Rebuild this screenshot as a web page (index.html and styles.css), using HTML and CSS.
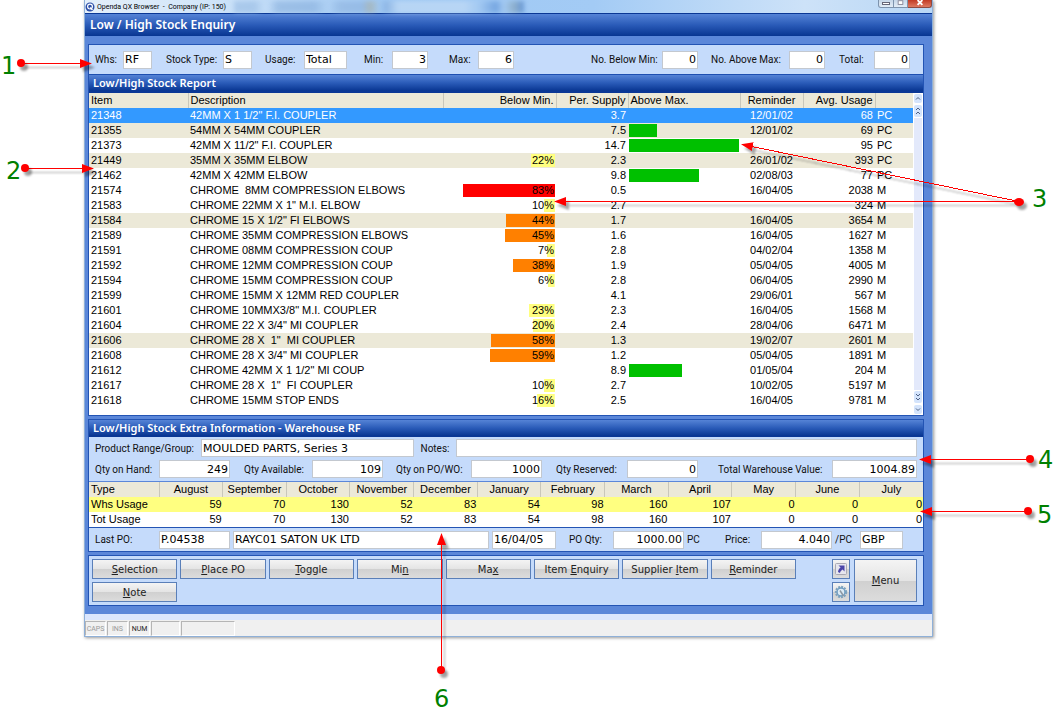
FILE: index.html
```html
<!DOCTYPE html>
<html lang="en">
<head>
    <meta charset="UTF-8">
    <meta name="viewport" content="width=device-width, initial-scale=1.0">
    <title>Low / High Stock Enquiry</title>
    <link rel="stylesheet" href="styles.css">
</head>
<body>
    <div class="window">
        <header class="titlebar">
            <svg class="app-icon" width="10" height="10" viewBox="0 0 10 10">
                <circle cx="5" cy="5" r="4.5" fill="#2c4fa8"/>
                <circle cx="5" cy="4.600" r="2.400" fill="none" stroke="#fff" stroke-width="1.200"/>
                <path d="M5 5.500L7.500 8" stroke="#fff" stroke-width="1.200"/>
            </svg>
            <span class="caption">Openda QX Browser &nbsp;- &nbsp;Company (IP: 150)</span>
            <span class="glass"></span>
            <div class="controls">
                <button class="ctl" aria-label="Minimise"><svg width="14" height="7" viewBox="0 0 14 7"><rect x="3.500" y="2.500" width="7" height="2" fill="#fff" stroke="#667"/></svg></button>
                <button class="ctl" aria-label="Maximise"><svg width="13" height="7" viewBox="0 0 14 7"><rect x="4.500" y="0.500" width="5" height="4" fill="#fff" stroke="#889"/></svg></button>
                <button class="ctl close" aria-label="Close"><svg width="23" height="7" viewBox="0 0 24 7"><path d="M10 0l5 5M15 0l-5 5" stroke="#fff" stroke-width="2"/></svg></button>
            </div>
        </header>

        <main class="app">
            <h1>Low / High Stock Enquiry</h1>

            <section class="panel">
                <form class="fields filter">
                    <label for="whs">Whs:</label><input id="whs" class="w-s" value="RF">
                    <label for="stockType">Stock Type:</label><input id="stockType" class="w-s" value="S">
                    <label for="usage">Usage:</label><input id="usage" class="w-l" value="Total">
                    <label for="min">Min:</label><input id="min" class="w-m num" value="3">
                    <label for="max">Max:</label><input id="max" class="w-m num" value="6">
                    <label for="below">No. Below Min:</label><input id="below" class="w-m num" value="0">
                    <label for="above">No. Above Max:</label><input id="above" class="w-m num" value="0">
                    <label for="total">Total:</label><input id="total" class="w-m num" value="0">
                </form>
                <h2 class="ruled">Low/High Stock Report</h2>
                <div class="report">
                    <table class="stock">
                        <colgroup>
                            <col class="c-item"><col><col class="c-below"><col class="c-supply"><col class="c-above"><col class="c-rem"><col class="c-avg"><col class="c-unit">
                        </colgroup>
                        <thead>
                            <tr><th>Item</th><th>Description</th><th class="num">Below Min.</th><th class="num">Per. Supply</th><th>Above Max.</th><th class="mid">Reminder</th><th class="num">Avg. Usage</th><th></th></tr>
                        </thead>
                        <tbody>
                            <tr class="selected"><td>21348</td><td>42MM X 1 1/2" F.I. COUPLER</td><td></td><td>3.7</td><td></td><td>12/01/02</td><td>68</td><td>PC</td></tr>
                            <tr class="shade"><td>21355</td><td>54MM X 54MM COUPLER</td><td></td><td>7.5</td><td><div class="over" style="width:25%"></div></td><td>12/01/02</td><td>69</td><td>PC</td></tr>
                            <tr><td>21373</td><td>42MM X 11/2" F.I. COUPLER</td><td></td><td>14.7</td><td><div class="over" style="width:100%"></div></td><td></td><td>95</td><td>PC</td></tr>
                            <tr class="shade"><td>21449</td><td>35MM X 35MM ELBOW</td><td><div class="under low" style="--level:22%">22%</div></td><td>2.3</td><td></td><td>26/01/02</td><td>393</td><td>PC</td></tr>
                            <tr><td>21462</td><td>42MM X 42MM ELBOW</td><td></td><td>9.8</td><td><div class="over" style="width:64%"></div></td><td>02/08/03</td><td>77</td><td>PC</td></tr>
                            <tr><td>21574</td><td>CHROME &nbsp;8MM COMPRESSION ELBOWS</td><td><div class="under high" style="--level:83%">83%</div></td><td>0.5</td><td></td><td>16/04/05</td><td>2038</td><td>M</td></tr>
                            <tr><td>21583</td><td>CHROME 22MM X 1" M.I. ELBOW</td><td><div class="under low" style="--level:10%">10%</div></td><td>2.7</td><td></td><td></td><td>324</td><td>M</td></tr>
                            <tr class="shade"><td>21584</td><td>CHROME 15 X 1/2" FI ELBOWS</td><td><div class="under medium" style="--level:44%">44%</div></td><td>1.7</td><td></td><td>16/04/05</td><td>3654</td><td>M</td></tr>
                            <tr><td>21589</td><td>CHROME 35MM COMPRESSION ELBOWS</td><td><div class="under medium" style="--level:45%">45%</div></td><td>1.6</td><td></td><td>16/04/05</td><td>1627</td><td>M</td></tr>
                            <tr><td>21591</td><td>CHROME 08MM COMPRESSION COUP</td><td><div class="under low" style="--level:7%">7%</div></td><td>2.8</td><td></td><td>04/02/04</td><td>1358</td><td>M</td></tr>
                            <tr><td>21592</td><td>CHROME 12MM COMPRESSION COUP</td><td><div class="under medium" style="--level:38%">38%</div></td><td>1.9</td><td></td><td>05/04/05</td><td>4005</td><td>M</td></tr>
                            <tr><td>21594</td><td>CHROME 15MM COMPRESSION COUP</td><td><div class="under low" style="--level:6%">6%</div></td><td>2.8</td><td></td><td>06/04/05</td><td>2990</td><td>M</td></tr>
                            <tr><td>21599</td><td>CHROME 15MM X 12MM RED COUPLER</td><td></td><td>4.1</td><td></td><td>29/06/01</td><td>567</td><td>M</td></tr>
                            <tr><td>21601</td><td>CHROME 10MMX3/8" M.I. COUPLER</td><td><div class="under low" style="--level:23%">23%</div></td><td>2.3</td><td></td><td>16/04/05</td><td>1568</td><td>M</td></tr>
                            <tr><td>21604</td><td>CHROME 22 X 3/4" MI COUPLER</td><td><div class="under low" style="--level:20%">20%</div></td><td>2.4</td><td></td><td>28/04/06</td><td>6471</td><td>M</td></tr>
                            <tr class="shade"><td>21606</td><td>CHROME 28 X &nbsp;1" &nbsp;MI COUPLER</td><td><div class="under medium" style="--level:58%">58%</div></td><td>1.3</td><td></td><td>19/02/07</td><td>2601</td><td>M</td></tr>
                            <tr><td>21608</td><td>CHROME 28 X 3/4" MI COUPLER</td><td><div class="under medium" style="--level:59%">59%</div></td><td>1.2</td><td></td><td>05/04/05</td><td>1891</td><td>M</td></tr>
                            <tr><td>21612</td><td>CHROME 42MM X 1 1/2" MI COUP</td><td></td><td>8.9</td><td><div class="over" style="width:48%"></div></td><td>01/05/04</td><td>204</td><td>M</td></tr>
                            <tr><td>21617</td><td>CHROME 28 X &nbsp;1" &nbsp;FI COUPLER</td><td><div class="under low" style="--level:10%">10%</div></td><td>2.7</td><td></td><td>10/02/05</td><td>5197</td><td>M</td></tr>
                            <tr><td>21618</td><td>CHROME 15MM STOP ENDS</td><td><div class="under low" style="--level:16%">16%</div></td><td>2.5</td><td></td><td>16/04/05</td><td>9781</td><td>M</td></tr>
                        </tbody>
                    </table>
                    <div class="scroller">
                        <button aria-label="Line up"><svg width="8" height="9" viewBox="0 0 8 9"><path d="M2 5.500l2-2 2 2"/></svg></button>
                        <button aria-label="Page up"><svg width="8" height="12" viewBox="0 0 8 12"><path d="M2 5l2-2 2 2M2 9l2-2 2 2"/></svg></button>
                        <div class="track"></div>
                        <button aria-label="Page down"><svg width="8" height="12" viewBox="0 0 8 12"><path d="M2 3l2 2 2-2M2 7l2 2 2-2"/></svg></button>
                        <button aria-label="Line down"><svg width="8" height="9" viewBox="0 0 8 9"><path d="M2 3.500l2 2 2-2"/></svg></button>
                    </div>
                </div>
            </section>

            <section class="panel">
                <h2>Low/High Stock Extra Information - Warehouse RF</h2>
                <div class="extra">
                    <div class="fields range">
                        <label for="range">Product Range/Group:</label><input id="range" value="MOULDED PARTS, Series 3">
                        <label for="notes">Notes:</label><input id="notes">
                    </div>
                    <div class="fields qty">
                        <label for="onHand">Qty on Hand:</label><input id="onHand" class="w-q num" value="249">
                        <label for="available">Qty Available:</label><input id="available" class="w-q num" value="109">
                        <label for="onPo">Qty on PO/WO:</label><input id="onPo" class="w-q num" value="1000">
                        <label for="reserved">Qty Reserved:</label><input id="reserved" class="w-q num" value="0">
                        <label for="value">Total Warehouse Value:</label><input id="value" class="num" value="1004.89">
                    </div>
                </div>
                <table class="months">
                    <colgroup><col class="c-type"><col span="12"></colgroup>
                    <thead>
                        <tr><th>Type</th><th>August</th><th>September</th><th>October</th><th>November</th><th>December</th><th>January</th><th>February</th><th>March</th><th>April</th><th>May</th><th>June</th><th>July</th></tr>
                    </thead>
                    <tbody>
                        <tr class="current"><td>Whs Usage</td><td>59</td><td>70</td><td>130</td><td>52</td><td>83</td><td>54</td><td>98</td><td>160</td><td>107</td><td>0</td><td>0</td><td>0</td></tr>
                        <tr><td>Tot Usage</td><td>59</td><td>70</td><td>130</td><td>52</td><td>83</td><td>54</td><td>98</td><td>160</td><td>107</td><td>0</td><td>0</td><td>0</td></tr>
                    </tbody>
                </table>
                <div class="fields order">
                    <label for="lastPo">Last PO:</label><input id="lastPo" class="w-q" value="P.04538">
                    <input class="supplier" aria-label="Supplier" value="RAYC01 SATON UK LTD">
                    <input class="w-date" aria-label="Order date" value="16/04/05">
                    <label for="poQty">PO Qty:</label><input id="poQty" class="w-q num" value="1000.00"><span>PC</span>
                    <label for="price">Price:</label><input id="price" class="w-q num" value="4.040"><span>/PC</span>
                    <input class="w-l" aria-label="Currency" value="GBP">
                </div>
            </section>

            <nav class="panel actions">
                <div class="buttons">
                    <button><u>S</u>election</button>
                    <button><u>P</u>lace PO</button>
                    <button><u>T</u>oggle</button>
                    <button>Mi<u>n</u></button>
                    <button>Ma<u>x</u></button>
                    <button>Item <u>E</u>nquiry</button>
                    <button>Supplier <u>I</u>tem</button>
                    <button><u>R</u>eminder</button>
                    <button><u>N</u>ote</button>
                </div>
                <div class="tools">
                    <button aria-label="Shortcut">
                        <svg width="14" height="14" viewBox="0 0 14 14">
                            <rect x="1.500" y="1.500" width="11" height="11" rx="1" fill="#e6e6ee" stroke="#a9a9b4"/>
                            <path d="M4.500 3.500H10.500V9.500L8.600 7.600C7.300 8.400 6.300 9.500 6 11L4 10C4.200 8 5.200 6.600 6.600 5.600Z" fill="#4a44a8"/>
                        </svg>
                    </button>
                    <button aria-label="Settings">
                        <svg width="14" height="14" viewBox="0 0 14 14">
                            <circle cx="7" cy="7" r="5.200" fill="none" stroke="#7fa3bd" stroke-width="2" stroke-dasharray="2 1"/>
                            <circle cx="7" cy="7" r="4" fill="#dcebf5" stroke="#6f9cc0" stroke-width="1.500"/>
                            <path d="M6 5.500L9.500 11" stroke="#8d98a3" stroke-width="1.500"/>
                        </svg>
                    </button>
                </div>
                <button class="menu"><u>M</u>enu</button>
            </nav>
        </main>

        <footer class="status">
            <span>CAPS</span><span>INS</span><span class="on">NUM</span><span class="blank"></span><span class="wide"></span>
        </footer>
    </div>

    <!-- numbered call-outs over the window -->
    <svg class="callouts" width="1056" height="712" viewBox="0 0 1056 712">
        <defs>
            <marker id="head" markerUnits="userSpaceOnUse" markerWidth="13" markerHeight="10" refX="11" refY="5" orient="auto">
                <path d="M0 0.500L12 5L0 9.500Z"/>
            </marker>
        </defs>
        <g class="arrows">
            <path d="M21 63.500H91"/>
            <path d="M25 168.500H93"/>
            <path d="M1019 201.500L742 144.500"/>
            <path d="M1019 201.500H555"/>
            <path d="M1030 459.500H920"/>
            <path d="M1028 511.500H921"/>
            <path d="M441.500 670V534"/>
        </g>
        <g class="dots">
            <circle cx="21" cy="63" r="4"/>
            <circle cx="25" cy="168" r="4"/>
            <ellipse cx="1019" cy="202" rx="5" ry="4"/>
            <circle cx="1030" cy="459" r="4"/>
            <circle cx="1028" cy="511" r="4"/>
            <circle cx="441" cy="670" r="4"/>
        </g>
        <g class="numbers">
            <text x="1" y="74">1</text>
            <text x="6" y="179">2</text>
            <text x="1032" y="207">3</text>
            <text x="1038" y="468">4</text>
            <text x="1037" y="523">5</text>
            <text x="434" y="707">6</text>
        </g>
    </svg>
</body>
</html>
```

FILE: styles.css
```css
* {
    box-sizing: border-box;
}
body {
    margin: 0;
    min-height: 100vh;
    background: #fff;
    color: #000;
    font-family: Roboto, sans-serif;
    font-size: 10px;
    position: relative;
}
button, input {
    font: inherit;
    color: inherit;
}
.window {
    margin: 0 123px 0 84px;
    border: 1px solid #8fb0d8;
    border-top: none;
    box-shadow: 1px 1px 3px rgba(0, 0, 0, 0.4);
}

/* title bar */
.titlebar {
    display: flex;
    align-items: center;
    height: 13px;
    background: linear-gradient(90deg, #e4effa 0, #d3e6f9 110px, #9fc8f3 300px, #a3cbf5 60%, #cde2f8 85%, #b9d7f5);
}
.app-icon {
    margin-right: 2px;
}
.caption {
    font-size: 7px;
    line-height: 12px;
}
.glass {
    width: 290px;
    height: 12px;
    margin-left: 8px;
    background: linear-gradient(90deg, #8fb5e0 0 20px, transparent 30px 34px, #7fa8d8 44px 80px, transparent 94px, #89aedb 106px 128px, #a8a68e 136px, transparent 146px, #7da5d8 152px, #cfe2f6 164px 230px, #a5c9f0 245px, #4d85d0 262px, #a5c9f0 270px, #7c98a8 280px, #2f66b8 290px);
    filter: blur(2px);
    opacity: 0.5;
}
.controls {
    display: flex;
    align-self: flex-start;
    margin-left: auto;
}
.ctl {
    display: flex;
    height: 8px;
    padding: 0;
    border: 1px solid #7d93ad;
    border-top: none;
    border-radius: 0 0 0 3px;
    background: linear-gradient(#c5d6e8, #e2ecf6);
}
.ctl + .ctl {
    border-left: none;
    border-radius: 0;
}
.ctl.close {
    border-color: #8c4a42;
    border-radius: 0 0 3px 0;
    background: linear-gradient(#c23a24, #de7a62);
}

/* page */
.app {
    padding: 0 8px 8px 3px;
    border-top: 1px solid #0a3795;
    background: #5b87d9;
}
h1, h2 {
    margin: 0;
    color: #fff;
    font-family: "Noto Sans", sans-serif;
    font-weight: 600;
    background: linear-gradient(#5583d6, #2a5bb8 50%, #083591);
}
h1 {
    margin: 0 -8px 8px -3px;
    padding-left: 5px;
    font-size: 12px;
    line-height: 22px;
}
h2 {
    padding-left: 4px;
    font-size: 11px;
    line-height: 16px;
    border-bottom: 1px solid #0a3795;
}
.ruled {
    border-top: 1px solid #1e4fb0;
    border-bottom-width: 2px;
}
.panel {
    border: 1px solid #2354b4;
    background: #c5dbfb;
}
.panel + .panel {
    margin-top: 3px;
}

/* label and field rows */
.fields {
    display: grid;
    align-items: center;
    padding: 0 6px;
    color: #111;
    white-space: nowrap;
}
.fields input {
    width: 100%;
    min-width: 0;
    height: 18px;
    padding: 0 1px;
    border: 1px solid #c3c8cf;
    background: #fff;
    color: #000;
    font-family: "DejaVu Sans", sans-serif;
    font-size: 11px;
}
.fields .w-s {
    width: 29px;
}
.fields .w-m {
    width: 36px;
}
.fields .w-l {
    width: 43px;
}
.fields .w-date {
    width: 64px;
}
.fields .w-q {
    width: 71px;
}
.fields .num {
    text-align: right;
}
.filter {
    grid-template-columns: 28px 43px 57px 42px 39px 60px 28px 57px 29px 1fr 71px 49px 78px 50px 35px 43px;
    height: 29px;
}
.extra {
    padding: 2px 0 3px;
    border-bottom: 1px solid #5b87d9;
}
.range {
    grid-template-columns: 106px 213px 42px 1fr;
    margin-bottom: 3px;
}
.range label:nth-of-type(2) {
    justify-self: center;
}
.qty {
    grid-template-columns: 64px 85px 68px 84px 75px 85px 71px 1fr 114px 85px;
}
.order {
    grid-template-columns: 64px 74px 1fr 77px 44px 74px 38px 36px 74px 25px 57px;
    height: 24px;
    border-top: 1px solid #2354b4;
}
.order .supplier {
    width: calc(100% - 3px);
}

/* tables */
table {
    width: 100%;
    border-collapse: collapse;
    table-layout: fixed;
    background: #fff;
    font-family: "Liberation Sans", Arial, sans-serif;
    font-size: 11px;
    line-height: 15px;
}
th, td {
    height: 15px;
    padding: 0 2px;
    text-align: left;
    white-space: nowrap;
}
th {
    font-weight: normal;
    background: #ece9d8;
    border-right: 1px solid #c9c7ba;
}
.shade {
    background: #ece9d8;
}
.selected {
    background: #3399ff;
    color: #fff;
}
.report {
    display: flex;
    height: 322px;
    background: #fff;
}
.stock {
    flex: 1;
    align-self: flex-start;
}
.stock th:last-child, .months th:last-child {
    border-right: none;
}
.c-item {
    width: 99px;
}
.c-below {
    width: 113px;
}
.c-supply {
    width: 72px;
}
.c-above {
    width: 112px;
}
.c-rem {
    width: 63px;
}
.c-avg {
    width: 72px;
}
.c-unit {
    width: 38px;
}
.stock .num, .stock td:nth-child(3), .stock td:nth-child(4), .stock td:nth-child(7) {
    text-align: right;
}
.stock .mid, .stock td:nth-child(6) {
    text-align: center;
}
.stock td:nth-child(3), .stock td:nth-child(5) {
    padding: 0 1px;
}
.under {
    height: 13px;
    padding-right: 1px;
    line-height: 13px;
    background: linear-gradient(var(--bar), var(--bar)) right / var(--level) 100% no-repeat;
}
.low {
    --bar: #ffff80;
}
.medium {
    --bar: #ff8000;
}
.high {
    --bar: #ff0000;
}
.over {
    height: 13px;
    background: #00c000;
}
.scroller {
    display: flex;
    flex-direction: column;
    width: 10px;
    padding: 0 1px;
}
.scroller button {
    display: flex;
    margin: 1px 0;
    padding: 0;
    border: none;
    border-radius: 2px;
    background: #d4e4fc;
}
.scroller path {
    fill: none;
    stroke: #4d6185;
}
.track {
    flex: 1;
    background: #e3e9fb;
}
.c-type {
    width: 70px;
}
.months th, .months td {
    text-align: right;
    padding: 0 1px;
}
.months th {
    text-align: center;
}
.months th:first-child, .months td:first-child {
    padding-left: 2px;
    text-align: left;
}
.current {
    background: #ffff80;
}

/* action buttons */
.actions {
    display: flex;
    gap: 4px;
    padding: 3px 6px 3px 3px;
}
.actions button {
    padding: 0;
    border: 1px solid #5a7fb8;
    background: linear-gradient(#f4f4f4, #e4e4e4 50%, #d0d0d0 51%, #dcdcdc);
    font-family: "DejaVu Sans", sans-serif;
    font-size: 10px;
    color: #222;
}
.buttons {
    display: grid;
    flex: 1;
    grid-template-columns: repeat(8, 1fr);
    grid-auto-rows: 20px;
    gap: 3px;
    margin-right: 32px;
}
.tools {
    display: grid;
    gap: 3px;
    width: 18px;
}
.tools button {
    display: flex;
    align-items: center;
    justify-content: center;
}
.actions .menu {
    width: 63px;
}

/* status bar */
.status {
    display: flex;
    gap: 1px;
    height: 22px;
    padding-top: 1px;
    border-top: 6px solid #dbe6fd;
    background: #f0f0f0;
    color: #999;
    font-size: 7px;
    line-height: 14px;
    text-align: center;
}
.status span {
    width: 21px;
    border: 1px solid #b5b5b5;
    border-right-color: #fff;
    border-bottom-color: #fff;
}
.status .on {
    color: #222;
}
.status .blank {
    width: 29px;
}
.status .wide {
    width: 54px;
}

/* call-outs */
.callouts {
    position: absolute;
    top: 0;
    left: 0;
    pointer-events: none;
}
.arrows, .dots {
    filter: drop-shadow(3px 4px 1px rgba(0, 0, 0, 0.35));
}
.arrows path {
    fill: none;
    stroke: #f00;
    marker-end: url(#head);
    shape-rendering: crispEdges;
}
marker path, .dots {
    fill: #f00;
}
.numbers {
    fill: #008000;
    font-family: "DejaVu Sans", sans-serif;
    font-size: 24px;
}
```
